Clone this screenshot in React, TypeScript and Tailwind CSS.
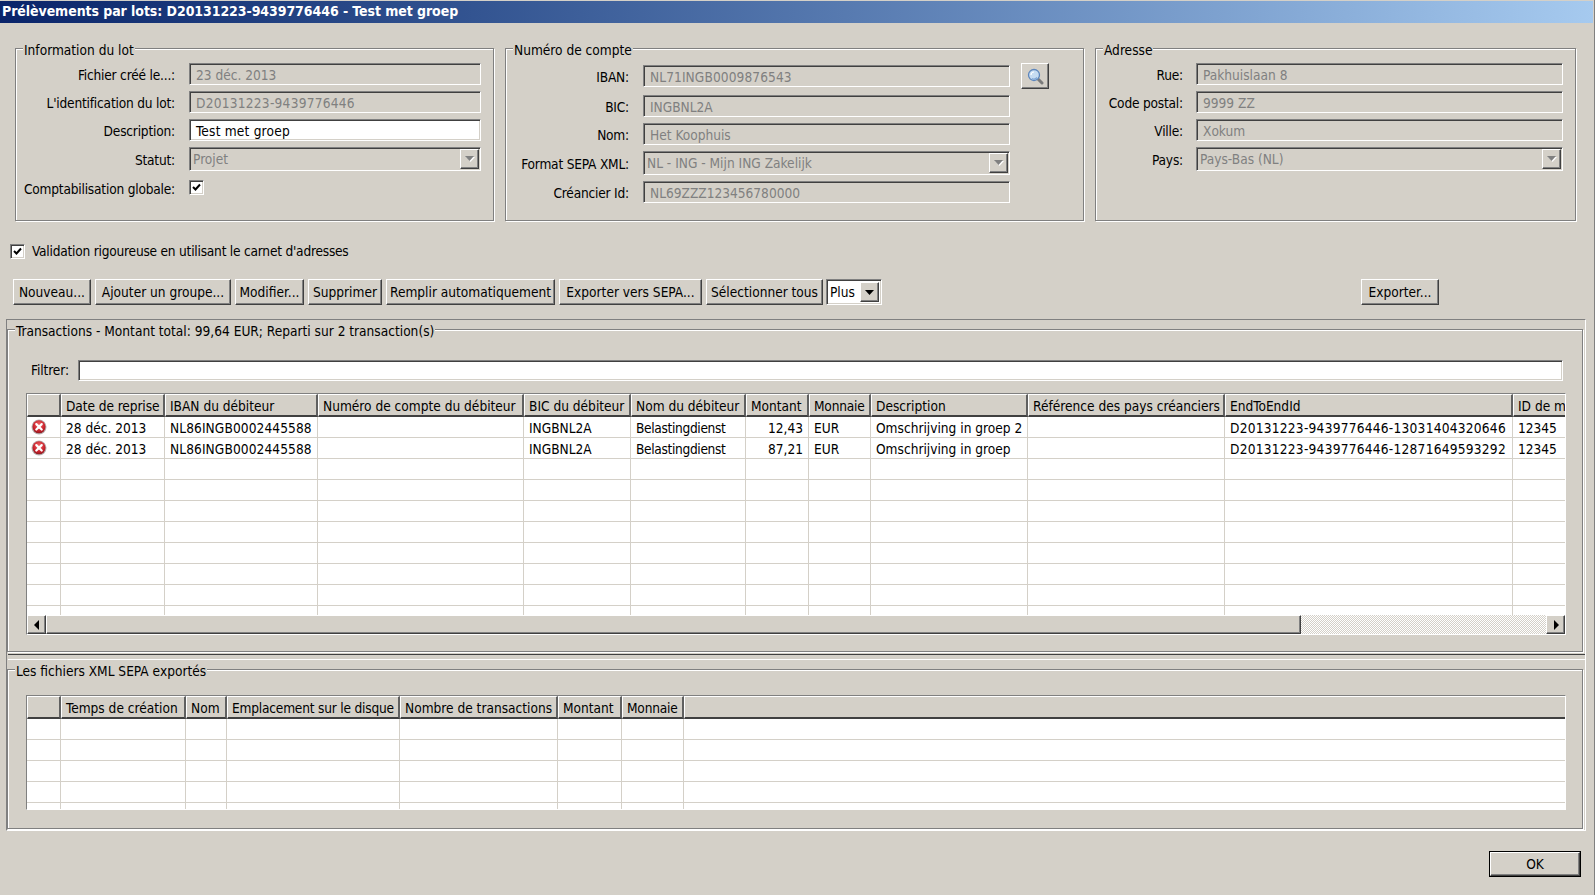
import type { ReactNode } from 'react';

const SUNKEN =
  'border border-t-[#808080] border-l-[#808080] border-b-white border-r-white shadow-[inset_1px_1px_0_#404040,inset_-1px_-1px_0_#d4d0c8]';
const RAISED =
  'border border-t-white border-l-white border-b-[#404040] border-r-[#404040] shadow-[inset_-1px_-1px_0_#808080]';
const ETCHED =
  'border border-[#808080] shadow-[1px_1px_0_#fff,inset_1px_1px_0_#fff]';

function Group({ title, className, children }: { title: string; className: string; children: ReactNode }) {
  return (
    <div className={`relative shrink-0 ${ETCHED} ${className}`}>
      <span className="absolute -top-[8px] left-[7px] h-[18px] bg-[#d4d0c8] px-px leading-[18px] whitespace-nowrap">
        {title}
      </span>
      {children}
    </div>
  );
}

function Label({ children, className = 'h-[22px] leading-[24px]' }: { children: ReactNode; className?: string }) {
  return <span className={`block text-right tracking-[-0.2px] whitespace-nowrap ${className}`}>{children}</span>;
}

function Field({ value, enabled, className = '' }: { value: string; enabled?: boolean; className?: string }) {
  return (
    <div
      className={`h-[22px] pl-[6px] leading-[22px] whitespace-nowrap overflow-hidden ${SUNKEN} ${
        enabled ? 'bg-white text-black' : 'text-[#808080]'
      } ${className}`}
    >
      {value}
    </div>
  );
}

function Combo({ value }: { value: string }) {
  return (
    <div className={`flex h-[24px] items-center justify-between pl-[3px] pr-px text-[#808080] ${SUNKEN}`}>
      <span className="pt-px whitespace-nowrap">{value}</span>
      <span className={`flex h-[20px] w-[19px] items-center justify-center ${RAISED}`}>
        <svg width="10" height="6" viewBox="0 0 10 6">
          <path d="M1 1h9L5.500 6z" fill="#fff" />
          <path d="M0 0h9L4.500 5z" fill="#808080" />
        </svg>
      </span>
    </div>
  );
}

function Checkbox() {
  return (
    <span className={`flex h-[15px] w-[15px] shrink-0 items-center justify-center bg-white ${SUNKEN}`}>
      <svg width="9" height="9" viewBox="0 0 9 9">
        <path d="M1 4l2.500 2.500L8 1.500" fill="none" stroke="#000" strokeWidth="2" />
      </svg>
    </span>
  );
}

function Button({ children, className }: { children: ReactNode; className: string }) {
  return (
    <button className={`h-[26px] shrink-0 text-center whitespace-nowrap ${RAISED} ${className}`}>{children}</button>
  );
}

function SearchIcon() {
  return (
    <svg width="17" height="17" viewBox="0 0 17 17">
      <path d="M10.500 10.500l4.500 4.500" stroke="#7a7a7a" strokeWidth="3" strokeLinecap="round" />
      <circle cx="7" cy="7" r="5.500" fill="#c6dcf2" stroke="#5d86bc" strokeWidth="1.300" />
      <path d="M4 7a3 3 0 0 1 3-3" fill="none" stroke="#fff" strokeWidth="1.200" />
      <path d="M5 10.500a4 4 0 0 0 5-1" fill="none" stroke="#7fa6d6" strokeWidth="1.200" />
    </svg>
  );
}

function ErrorIcon({ id }: { id: string }) {
  return (
    <svg width="16" height="16" viewBox="0 0 16 16">
      <defs>
        <radialGradient id={id} cx="50%" cy="35%" r="65%">
          <stop offset="0%" stopColor="#f06a6a" />
          <stop offset="70%" stopColor="#c8202a" />
          <stop offset="100%" stopColor="#8e1a20" />
        </radialGradient>
      </defs>
      <circle cx="8" cy="8" r="7.500" fill="#b8b0b0" />
      <circle cx="8" cy="7.800" r="6.500" fill={`url(#${id})`} />
      <path d="M5.300 5.100l5.400 5.400M10.700 5.100l-5.400 5.400" stroke="#fff" strokeWidth="2.200" strokeLinecap="round" />
    </svg>
  );
}

interface Column {
  title: string;
  width: string;
  right?: boolean;
  tracking?: string;
  headerTracking?: string;
}

const TRANSACTION_COLUMNS: Column[] = [
  { title: '', width: 'w-[34px]' },
  { title: 'Date de reprise', width: 'w-[104px]', headerTracking: 'tracking-[-0.08px]' },
  { title: 'IBAN du débiteur', width: 'w-[153px]', tracking: 'tracking-[0.1px]' },
  { title: 'Numéro de compte du débiteur', width: 'w-[206px]' },
  { title: 'BIC du débiteur', width: 'w-[107px]' },
  { title: 'Nom du débiteur', width: 'w-[115px]', tracking: 'tracking-[-0.33px]' },
  { title: 'Montant', width: 'w-[63px]', right: true },
  { title: 'Monnaie', width: 'w-[62px]', headerTracking: 'tracking-[-0.2px]' },
  { title: 'Description', width: 'w-[157px]' },
  { title: 'Référence des pays créanciers', width: 'w-[197px]' },
  { title: 'EndToEndId', width: 'w-[288px]', tracking: 'tracking-[0.25px]' },
  { title: 'ID de mandat', width: 'w-[54px]' },
];

const EXPORT_COLUMNS: Column[] = [
  { title: '', width: 'w-[34px]' },
  { title: 'Temps de création', width: 'w-[125px]' },
  { title: 'Nom', width: 'w-[41px]' },
  { title: 'Emplacement sur le disque', width: 'w-[173px]', headerTracking: 'tracking-[-0.2px]' },
  { title: 'Nombre de transactions', width: 'w-[158px]' },
  { title: 'Montant', width: 'w-[64px]' },
  { title: 'Monnaie', width: 'w-[62px]', headerTracking: 'tracking-[-0.2px]' },
  { title: '', width: 'w-[900px]' },
];

const TRANSACTIONS = [
  ['', '28 déc. 2013', 'NL86INGB0002445588', '', 'INGBNL2A', 'Belastingdienst', '12,43', 'EUR', 'Omschrijving in groep 2', '', 'D20131223-9439776446-13031404320646', '12345'],
  ['', '28 déc. 2013', 'NL86INGB0002445588', '', 'INGBNL2A', 'Belastingdienst', '87,21', 'EUR', 'Omschrijving in groep', '', 'D20131223-9439776446-12871649593292', '12345'],
];

function HeaderRow({ columns }: { columns: Column[] }) {
  return (
    <div className="flex h-[23px] shrink-0">
      {columns.map((col, i) => (
        <div
          key={i}
          className={`shrink-0 overflow-hidden border-t border-l border-t-white border-l-white border-b-2 border-r-2 border-b-[#404040] border-r-[#606060] pl-[4px] leading-[22px] whitespace-nowrap ${col.width} ${col.headerTracking ?? ''}`}
        >
          {col.title}
        </div>
      ))}
    </div>
  );
}

function BodyRow({ columns, cells, icon }: { columns: Column[]; cells?: string[]; icon?: string }) {
  return (
    <div className="flex h-[21px] shrink-0 bg-white">
      {columns.map((col, i) => (
        <div
          key={i}
          className={`flex shrink-0 items-center overflow-hidden border-r border-b border-[#d4d0c8] pt-[3px] pl-[5px] pr-[5px] whitespace-nowrap ${col.width} ${
            col.right ? 'justify-end' : ''
          } ${col.tracking ?? ''}`}
        >
          {i === 0 && icon ? <span className="-mt-[3px] -ml-[1px] flex"><ErrorIcon id={icon} /></span> : cells?.[i]}
        </div>
      ))}
    </div>
  );
}

function ScrollBar() {
  return (
    <div className="flex h-[19px] shrink-0">
      <div className={`flex w-[19px] shrink-0 items-center justify-center bg-[#d4d0c8] ${RAISED}`}>
        <svg width="6" height="10" viewBox="0 0 6 10">
          <path d="M5 0v10L0 5z" fill="#000" />
        </svg>
      </div>
      <div className={`w-[1255px] shrink-0 bg-[#d4d0c8] ${RAISED}`} />
      <div className="flex-1 bg-[image:repeating-conic-gradient(#d4d0c8_0_25%,#fff_0_50%)] bg-[length:2px_2px]" />
      <div className={`flex w-[19px] shrink-0 items-center justify-center bg-[#d4d0c8] ${RAISED}`}>
        <svg width="6" height="10" viewBox="0 0 6 10">
          <path d="M1 0v10l5-5z" fill="#000" />
        </svg>
      </div>
    </div>
  );
}

export default function App() {
  return (
    <div className="flex h-[895px] w-[1595px] flex-col overflow-hidden border-r border-[#808080] bg-[#d4d0c8] pt-px font-['DejaVu_Sans_Condensed','DejaVu_Sans',sans-serif] text-[13.600px] text-black">
      <div className="mr-px h-[22px] shrink-0 bg-gradient-to-r from-[#0a246a] to-[#a6caef] pl-[2px] text-[14px] leading-[21px] font-bold tracking-[-0.07px] text-white">
        Prélèvements par lots: D20131223-9439776446 - Test met groep
      </div>

      <div className="mt-[25px] flex gap-[11px] pl-[15px]">
        <Group title="Information du lot" className="h-[173px] w-[479px]">
          <div className="grid grid-cols-[159px_292px] gap-x-[14px] gap-y-[6px] pt-[14px]">
            <Label>Fichier créé le...:</Label>
            <Field value="23 déc. 2013" />
            <Label>L'identification du lot:</Label>
            <Field value="D20131223-9439776446" className="tracking-[0.25px]" />
            <Label>Description:</Label>
            <Field value="Test met groep" enabled className="tracking-[0.2px]" />
            <Label className="h-[24px] leading-[26px]">Statut:</Label>
            <Combo value="Projet" />
            <Label className="mt-px h-[22px] leading-[22px]">Comptabilisation globale:</Label>
            <div className="mt-[3px]">
              <Checkbox />
            </div>
          </div>
        </Group>

        <Group title="Numéro de compte" className="h-[173px] w-[579px]">
          <div className="grid grid-cols-[123px_367px_28px] items-center gap-x-[14px] gap-y-[6px] pt-[14px]">
            <Label>IBAN:</Label>
            <Field value="NL71INGB0009876543" className="tracking-[0.1px]" />
            <div className={`-ml-[3px] flex h-[26px] w-[28px] items-center justify-center ${RAISED}`}>
              <SearchIcon />
            </div>
            <Label>BIC:</Label>
            <Field value="INGBNL2A" />
            <span />
            <Label>Nom:</Label>
            <Field value="Het Koophuis" />
            <span />
            <Label className="h-[24px] leading-[26px]">Format SEPA XML:</Label>
            <Combo value="NL - ING - Mijn ING Zakelijk" />
            <span />
            <Label>Créancier Id:</Label>
            <Field value="NL69ZZZ123456780000" />
            <span />
          </div>
        </Group>

        <Group title="Adresse" className="h-[173px] w-[481px]">
          <div className="grid grid-cols-[87px_367px] gap-x-[13px] gap-y-[6px] pt-[14px]">
            <Label>Rue:</Label>
            <Field value="Pakhuislaan 8" />
            <Label>Code postal:</Label>
            <Field value="9999 ZZ" />
            <Label>Ville:</Label>
            <Field value="Xokum" />
            <Label className="h-[24px] leading-[26px]">Pays:</Label>
            <Combo value="Pays-Bas (NL)" />
          </div>
        </Group>
      </div>

      <div className="mt-[23px] flex h-[15px] items-center gap-[7px] pl-[10px]">
        <Checkbox />
        <span className="tracking-[-0.22px] whitespace-nowrap">Validation rigoureuse en utilisant le carnet d'adresses</span>
      </div>

      <div className="mt-[20px] flex gap-[4px] pr-[155px] pl-[13px]">
        <Button className="w-[78px]">Nouveau...</Button>
        <Button className="w-[136px]">Ajouter un groupe...</Button>
        <Button className="w-[69px]">Modifier...</Button>
        <Button className="w-[74px]">Supprimer</Button>
        <Button className="w-[169px]">Remplir automatiquement</Button>
        <Button className="w-[143px]">Exporter vers SEPA...</Button>
        <Button className="w-[117px]">Sélectionner tous</Button>
        <div className={`-ml-px flex h-[26px] w-[56px] shrink-0 items-center justify-between bg-white pl-[3px] pr-[2px] ${SUNKEN}`}>
          <span>Plus</span>
          <span className={`flex h-[20px] w-[19px] items-center justify-center bg-[#d4d0c8] ${RAISED}`}>
            <svg width="9" height="5" viewBox="0 0 9 5">
              <path d="M0 0h9L4.500 5z" fill="#000" />
            </svg>
          </span>
        </div>
        <Button className="ml-auto w-[78px]">Exporter...</Button>
      </div>

      <div className={`mt-[14px] ml-[6px] flex h-[512px] w-[1580px] shrink-0 flex-col pt-[9px] ${SUNKEN} shadow-none`}>
        <Group title="Transactions - Montant total: 99,64 EUR; Reparti sur 2 transaction(s)" className="h-[323px] w-[1576px]">
          <div className="flex h-[21px] items-center gap-[11px] mt-[30px] pl-[23px]">
            <span className="w-[36px] shrink-0 tracking-[-0.1px] whitespace-nowrap">Filtrer:</span>
            <div className={`h-[21px] w-[1485px] shrink-0 bg-white ${SUNKEN}`} />
          </div>
          <div className={`mt-[12px] ml-[18px] flex h-[242px] w-[1540px] flex-col overflow-hidden ${SUNKEN}`}>
            <HeaderRow columns={TRANSACTION_COLUMNS} />
            <div className="flex min-h-0 flex-1 flex-col overflow-hidden bg-white">
              {TRANSACTIONS.map((cells, i) => (
                <BodyRow key={i} columns={TRANSACTION_COLUMNS} cells={cells} icon={`err${i}`} />
              ))}
              {Array.from({ length: 8 }).map((_, i) => (
                <BodyRow key={i} columns={TRANSACTION_COLUMNS} />
              ))}
            </div>
            <ScrollBar />
          </div>
        </Group>

        <div className="mt-[2px] ml-px h-[6px] w-[1577px] shrink-0 border-t border-b border-t-[#404040] border-b-white" />

        <Group title="Les fichiers XML SEPA exportés" className="mt-[9px] h-[160px] w-[1576px]">
          <div className={`mt-[25px] ml-[18px] flex h-[115px] w-[1540px] flex-col overflow-hidden ${SUNKEN}`}>
            <HeaderRow columns={EXPORT_COLUMNS} />
            <div className="flex min-h-0 flex-1 flex-col overflow-hidden bg-white">
              {Array.from({ length: 5 }).map((_, i) => (
                <BodyRow key={i} columns={EXPORT_COLUMNS} />
              ))}
            </div>
          </div>
        </Group>
      </div>

      <div className="mt-[20px] flex justify-end pr-[13px]">
        <button className="h-[26px] w-[92px] border border-black">
          <span className={`flex h-full w-full items-center justify-center ${RAISED}`}>OK</span>
        </button>
      </div>
    </div>
  );
}
